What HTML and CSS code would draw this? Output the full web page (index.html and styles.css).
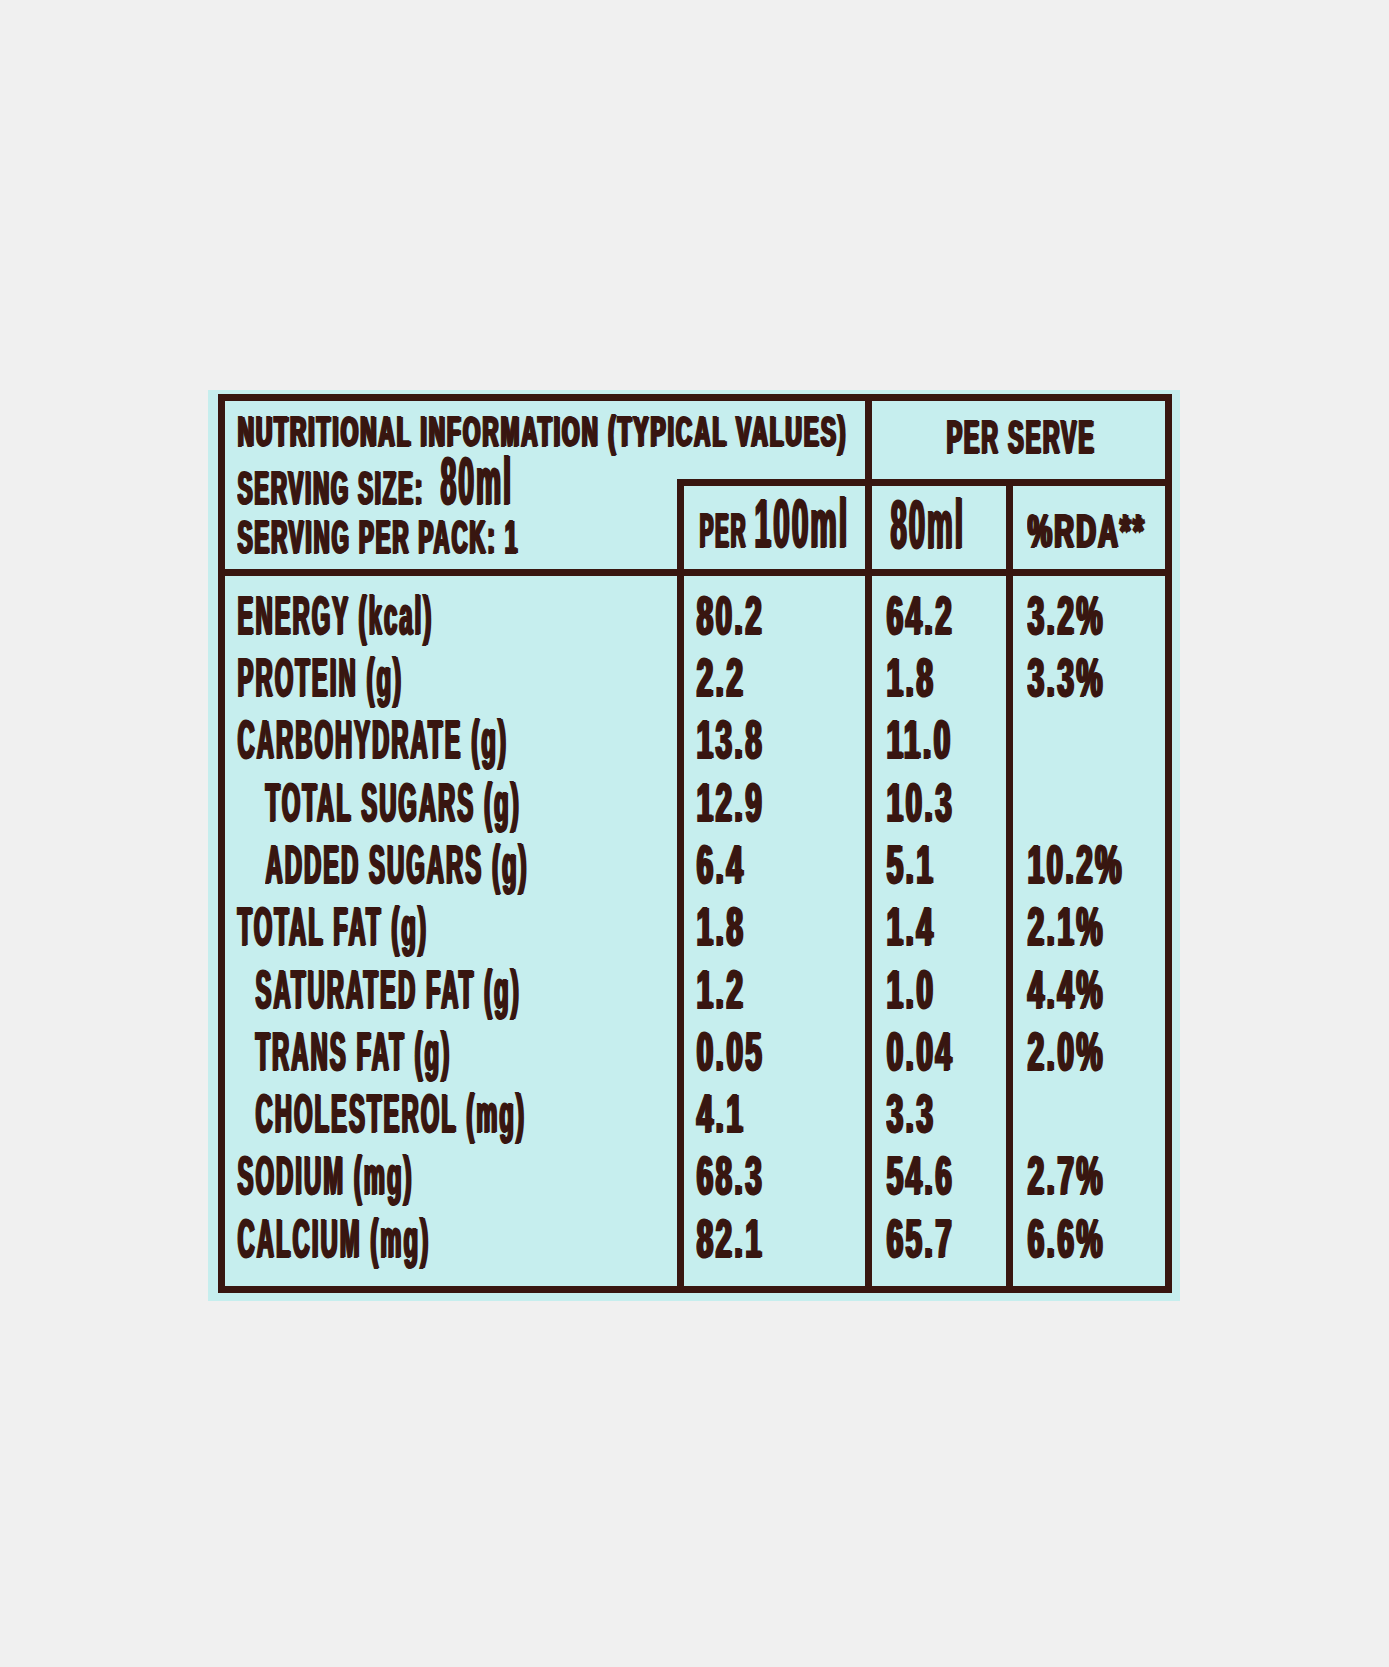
FILE: index.html
```html
<!DOCTYPE html>
<html lang="en">
<head>
<meta charset="utf-8">
<title>Nutritional Information</title>
<link rel="stylesheet" href="styles.css">
</head>
<body>
<div class="sheet">
  <div class="panel">
    <div class="title">
      <div class="tl1"><span class="t">NUTRITIONAL INFORMATION (TYPICAL VALUES)</span></div>
      <div class="tl2"><span class="t">SERVING SIZE:<span class="big">80ml</span></span></div>
      <div class="tl3"><span class="t">SERVING PER PACK: 1</span></div>
    </div>
    <div class="perserve"><span class="t">PER SERVE</span></div>
    <div class="hcell h100"><span class="t">PER <span class="big">100ml</span></span></div>
    <div class="hcell h80"><span class="t">80ml</span></div>
    <div class="hcell hrda"><span class="t">%RDA**</span></div>

    <div class="dcol names">
      <div class="r"><span class="t">ENERGY (kcal)</span></div>
      <div class="r"><span class="t">PROTEIN (g)</span></div>
      <div class="r"><span class="t">CARBOHYDRATE (g)</span></div>
      <div class="r in1"><span class="t">TOTAL SUGARS (g)</span></div>
      <div class="r in1"><span class="t">ADDED SUGARS (g)</span></div>
      <div class="r"><span class="t">TOTAL FAT (g)</span></div>
      <div class="r in2"><span class="t">SATURATED FAT (g)</span></div>
      <div class="r in2"><span class="t">TRANS FAT (g)</span></div>
      <div class="r in2"><span class="t">CHOLESTEROL (mg)</span></div>
      <div class="r"><span class="t">SODIUM (mg)</span></div>
      <div class="r"><span class="t">CALCIUM (mg)</span></div>
    </div>
    <div class="dcol nums v100">
      <div class="r"><span class="t">80.2</span></div>
      <div class="r"><span class="t">2.2</span></div>
      <div class="r"><span class="t">13.8</span></div>
      <div class="r"><span class="t">12.9</span></div>
      <div class="r"><span class="t">6.4</span></div>
      <div class="r"><span class="t">1.8</span></div>
      <div class="r"><span class="t">1.2</span></div>
      <div class="r"><span class="t">0.05</span></div>
      <div class="r"><span class="t">4.1</span></div>
      <div class="r"><span class="t">68.3</span></div>
      <div class="r"><span class="t">82.1</span></div>
    </div>
    <div class="dcol nums v80">
      <div class="r"><span class="t">64.2</span></div>
      <div class="r"><span class="t">1.8</span></div>
      <div class="r"><span class="t">11.0</span></div>
      <div class="r"><span class="t">10.3</span></div>
      <div class="r"><span class="t">5.1</span></div>
      <div class="r"><span class="t">1.4</span></div>
      <div class="r"><span class="t">1.0</span></div>
      <div class="r"><span class="t">0.04</span></div>
      <div class="r"><span class="t">3.3</span></div>
      <div class="r"><span class="t">54.6</span></div>
      <div class="r"><span class="t">65.7</span></div>
    </div>
    <div class="dcol nums vrda">
      <div class="r"><span class="t">3.2%</span></div>
      <div class="r"><span class="t">3.3%</span></div>
      <div class="r"></div>
      <div class="r"></div>
      <div class="r"><span class="t">10.2%</span></div>
      <div class="r"><span class="t">2.1%</span></div>
      <div class="r"><span class="t">4.4%</span></div>
      <div class="r"><span class="t">2.0%</span></div>
      <div class="r"></div>
      <div class="r"><span class="t">2.7%</span></div>
      <div class="r"><span class="t">6.6%</span></div>
    </div>
  </div>
</div>
</body>
</html>
```

FILE: styles.css
```css
html, body {
  margin: 0;
  background: #f0f0f0;
}
body {
  padding: 390px 0 0 208px;
  font-family: "Liberation Sans", Arial, sans-serif;
  font-weight: 700;
  color: #381610;
}
.sheet {
  width: fit-content;
  background: #c6eeee;
  padding: 4px 8px 8px 10px;
}
.panel {
  display: grid;
  grid-template-columns: 452px 188px 141px 159px;
  grid-template-rows: 78px 90px 717px;
  border: 7px solid #381610;
}
.t {
  display: inline-block;
  line-height: 0;
  white-space: nowrap;
  transform-origin: 0 0;
  -webkit-text-stroke: 2px #381610;
  text-shadow: 2px 0 0 #381610, 4px 0 0 #381610;
}
.t .big {
  display: inline-block;
  line-height: 0;
  transform-origin: 0 0;
}

/* title block */
.title {
  grid-column: 1 / 3;
  grid-row: 1 / 3;
  padding: 6.4px 0 0 12px;
  white-space: nowrap;
}
.tl1 { font-size: 42px; line-height: 50px; letter-spacing: 4px; }
.tl1 .t { transform: scaleX(0.532); }
.tl2 { font-size: 46px; line-height: 63.4px; letter-spacing: 4px; }
.tl2 .t { transform: scaleX(0.48); }
.tl2 .big { font-size: 66px; letter-spacing: 5px; margin-left: 34px; transform: scaleX(0.885); }
.tl3 { font-size: 46px; line-height: 32.6px; letter-spacing: 4px; }
.tl3 .t { transform: scaleX(0.483); }

/* column headers */
.perserve {
  grid-column: 3 / 5;
  grid-row: 1;
  border-left: 7px solid #381610;
  padding-left: 74px;
  font-size: 47px;
  line-height: 72px;
  letter-spacing: 4px;
  white-space: nowrap;
}
.perserve .t { transform: scaleX(0.49); }

.hcell {
  grid-row: 2;
  border-left: 7px solid #381610;
  border-top: 7px solid #381610;
  white-space: nowrap;
}
.h100 {
  grid-column: 2;
  padding-left: 15px;
  font-size: 48px;
  line-height: 90px;
  letter-spacing: 4px;
}
.h100 .t { transform: scaleX(0.43); }
.h100 .big { font-size: 68px; letter-spacing: 5px; transform: scaleX(1.01); }
.h80 {
  grid-column: 3;
  padding-left: 18px;
  font-size: 68px;
  line-height: 77px;
  letter-spacing: 5px;
}
.h80 .t { transform: scaleX(0.425); }
.hrda {
  grid-column: 4;
  padding-left: 14px;
  font-size: 46px;
  line-height: 90px;
  letter-spacing: 4px;
}
.hrda .t { transform: scaleX(0.59); }

/* data columns */
.dcol {
  grid-row: 3;
  border-top: 7px solid #381610;
  padding-top: 7.8px;
  font-size: 54px;
  letter-spacing: 5px;
}
.dcol + .dcol { border-left: 7px solid #381610; }
.names { padding-left: 12px; }
.names .t { transform: scaleX(0.437); }
.v100 { padding-left: 12px; }
.v80 { padding-left: 14px; }
.vrda { padding-left: 14px; }
.nums .t { transform: scaleX(0.54); }

.r {
  height: 62.3px;
  line-height: 62.3px;
  white-space: nowrap;
}
.in1 { padding-left: 28px; }
.in2 { padding-left: 18px; }
```
